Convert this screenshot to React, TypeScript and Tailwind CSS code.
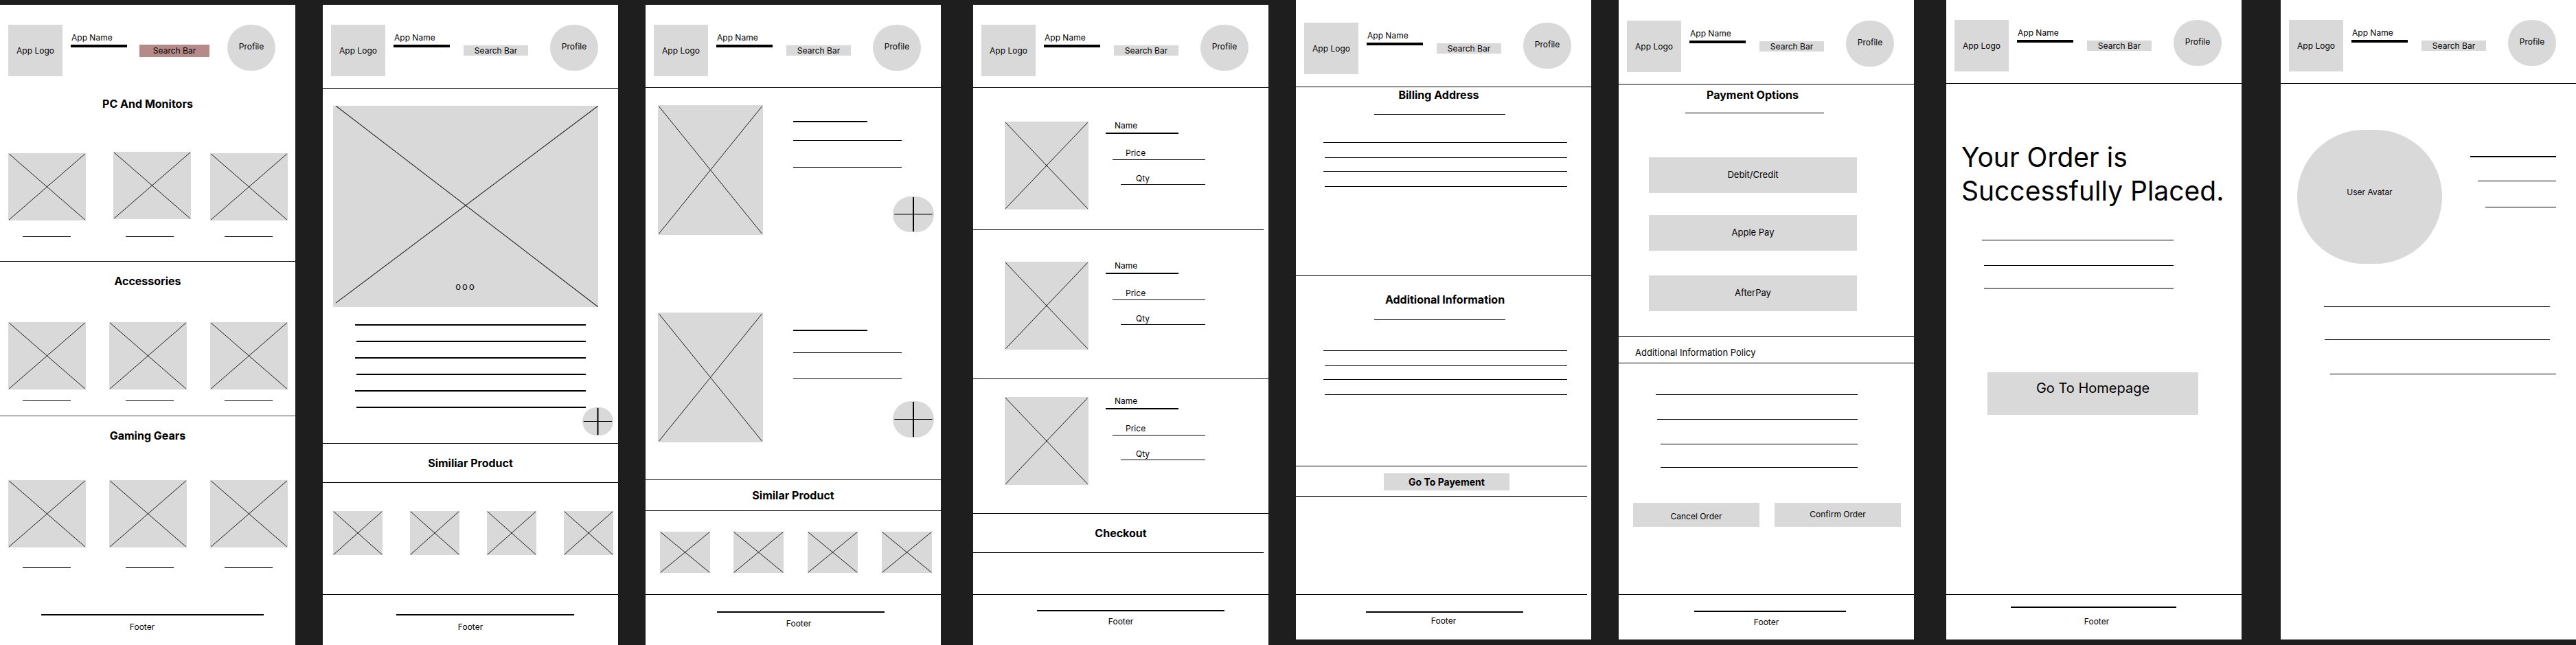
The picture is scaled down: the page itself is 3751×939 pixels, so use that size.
import React from "react";

function Ph({ className = "" }: { className?: string }) {
  return (
    <div className={`relative shrink-0 bg-[#d9d9d9] ${className}`}>
      <svg className="absolute inset-0 h-full w-full" viewBox="0 0 100 100" preserveAspectRatio="none">
        <line x1="1" y1="1" x2="99" y2="99" stroke="#1a1a1a" strokeWidth="1" vectorEffect="non-scaling-stroke" />
        <line x1="99" y1="1" x2="1" y2="99" stroke="#1a1a1a" strokeWidth="1" vectorEffect="non-scaling-stroke" />
      </svg>
    </div>
  );
}

function PlusBtn({ className = "" }: { className?: string }) {
  return (
    <div className={`relative shrink-0 rounded-full bg-[#d9d9d9] ${className}`}>
      <svg className="absolute inset-0 h-full w-full" viewBox="0 0 100 100" preserveAspectRatio="none">
        <line x1="4" y1="50" x2="96" y2="50" stroke="#000" strokeWidth="1" vectorEffect="non-scaling-stroke" />
        <line x1="50" y1="2" x2="50" y2="98" stroke="#000" strokeWidth="2" vectorEffect="non-scaling-stroke" />
      </svg>
    </div>
  );
}

function Header({ className = "", pink = false }: { className?: string; pink?: boolean }) {
  return (
    <div className={`flex shrink-0 items-start border-black ${className}`}>
      <div className="ml-[12px] flex h-[75px] w-[79px] shrink-0 items-center justify-center bg-[#d9d9d9] text-[12px]">App Logo</div>
      <div className="ml-[12px] mt-[11px] w-[82px] shrink-0">
        <div className="pl-[1px] text-[12px] leading-[15px]">App Name</div>
        <div className="mt-[3px] h-[4px] bg-black" />
      </div>
      {pink ? (
        <div className="ml-[18px] mt-[29px] flex h-[18px] w-[102px] shrink-0 items-center justify-center bg-[#b78a8a] text-[12px]">Search Bar</div>
      ) : (
        <div className="ml-[20px] mt-[30px] flex h-[15px] w-[94px] shrink-0 items-center justify-center bg-[#d9d9d9] text-[12px]">Search Bar</div>
      )}
      <div className={`${pink ? "ml-[26px]" : "ml-[32px]"} flex h-[67px] w-[70px] shrink-0 items-center justify-center rounded-full bg-[#d9d9d9] pb-[3px] text-[12px]`}>Profile</div>
    </div>
  );
}

function Footer({ lineCls, textCls }: { lineCls: string; textCls: string }) {
  return (
    <div className="flex flex-col">
      <div className={`h-[2px] bg-black ${lineCls}`} />
      <div className={`text-center text-[12px] leading-[14px] ${textCls}`}>Footer</div>
    </div>
  );
}

function CartItem() {
  return (
    <div className="flex items-start">
      <Ph className="ml-[46px] h-[128px] w-[122px]" />
      <div className="ml-[25px] flex flex-col text-[12px] leading-[12px]">
        <div className="w-[106px] pl-[13px]">Name</div>
        <div className="mt-[4px] h-[2px] w-[106px] bg-black" />
        <div className="ml-[10px] mt-[22px] pl-[19px]">Price</div>
        <div className="ml-[10px] mt-[3px] h-px w-[135px] bg-black" />
        <div className="ml-[22px] mt-[21px] pl-[22px]">Qty</div>
        <div className="ml-[22px] mt-[2px] h-px w-[123px] bg-black" />
      </div>
    </div>
  );
}

export default function App() {
  return (
    <div className="flex h-[939px] w-[3751px] items-start overflow-hidden bg-[#1e1e1e] font-[Inter,sans-serif] text-black">
      {/* Home */}
      <div className="mt-[7px] flex h-[932px] w-[430px] shrink-0 flex-col bg-white">
        <Header className="h-[121px] pt-[29px]" pink />
        <section className="flex h-[253px] shrink-0 flex-col border-b border-black">
          <h2 className="mt-[13px] text-center text-[16px] font-bold leading-[20px]">PC And Monitors</h2>
          <div className="mt-[62px] flex items-start">
            <Ph className="ml-[12px] h-[98px] w-[113px]" />
            <Ph className="ml-[40px] -mt-[2px] h-[98px] w-[113px]" />
            <Ph className="ml-[28px] h-[98px] w-[113px]" />
          </div>
          <div className="mt-[23px] flex">
            <div className="ml-[33px] h-px w-[70px] bg-black" />
            <div className="ml-[80px] h-px w-[70px] bg-black" />
            <div className="ml-[74px] h-px w-[70px] bg-black" />
          </div>
        </section>
        <section className="flex h-[225px] shrink-0 flex-col border-b border-[#444]">
          <h2 className="mt-[18px] text-center text-[16px] font-bold leading-[20px]">Accessories</h2>
          <div className="mt-[50px] flex">
            <Ph className="ml-[12px] h-[98px] w-[113px]" />
            <Ph className="ml-[34px] h-[98px] w-[113px]" />
            <Ph className="ml-[34px] h-[98px] w-[113px]" />
          </div>
          <div className="mt-[16px] flex">
            <div className="ml-[33px] h-px w-[70px] bg-black" />
            <div className="ml-[80px] h-px w-[70px] bg-black" />
            <div className="ml-[74px] h-px w-[70px] bg-black" />
          </div>
        </section>
        <section className="flex shrink-0 flex-col">
          <h2 className="mt-[18px] text-center text-[16px] font-bold leading-[20px]">Gaming Gears</h2>
          <div className="mt-[55px] flex">
            <Ph className="ml-[12px] h-[98px] w-[113px]" />
            <Ph className="ml-[34px] h-[98px] w-[113px]" />
            <Ph className="ml-[34px] h-[98px] w-[113px]" />
          </div>
          <div className="mt-[29px] flex">
            <div className="ml-[33px] h-px w-[70px] bg-black" />
            <div className="ml-[80px] h-px w-[70px] bg-black" />
            <div className="ml-[74px] h-px w-[70px] bg-black" />
          </div>
        </section>
        <div className="mt-[67px]">
          <Footer lineCls="ml-[60px] w-[324px]" textCls="mt-[10px] pr-[16px]" />
        </div>
      </div>

      {/* Product detail */}
      <div className="ml-[40px] mt-[7px] flex h-[932px] w-[430px] shrink-0 flex-col bg-white">
        <Header className="h-[122px] border-b pt-[29px]" />
        <section className="flex h-[517px] shrink-0 flex-col border-b border-black">
          <div className="relative ml-[15px] mt-[25px] flex h-[293px] w-[386px] items-end justify-center bg-[#d9d9d9] pb-[22px]">
            <svg className="absolute inset-0 h-full w-full" viewBox="0 0 100 100" preserveAspectRatio="none">
              <line x1="1" y1="0" x2="100" y2="100" stroke="#1a1a1a" strokeWidth="1" vectorEffect="non-scaling-stroke" />
              <line x1="100" y1="0" x2="1" y2="98" stroke="#1a1a1a" strokeWidth="1" vectorEffect="non-scaling-stroke" />
            </svg>
            <span className="relative text-[13px] leading-[16px] tracking-[2px]">ooo</span>
          </div>
          <div className="ml-[47px] mt-[25px] h-[2px] w-[336px] bg-black" />
          <div className="ml-[49px] mt-[22px] h-[2px] w-[334px] bg-black" />
          <div className="ml-[47px] mt-[22px] h-[2px] w-[336px] bg-black" />
          <div className="ml-[49px] mt-[22px] h-[2px] w-[334px] bg-black" />
          <div className="ml-[47px] mt-[22px] h-[2px] w-[336px] bg-black" />
          <div className="ml-[49px] mt-[22px] h-[2px] w-[334px] bg-black" />
          <PlusBtn className="ml-[378px] -mt-[1px] h-[41px] w-[45px]" />
        </section>
        <section className="flex h-[57px] shrink-0 items-center justify-center border-b border-black">
          <h2 className="text-[16px] font-bold leading-[20px]">Similiar Product</h2>
        </section>
        <section className="flex h-[163px] shrink-0 items-start border-b border-black pt-[41px]">
          <Ph className="ml-[15px] h-[64px] w-[72px]" />
          <Ph className="ml-[40px] h-[64px] w-[72px]" />
          <Ph className="ml-[40px] h-[64px] w-[72px]" />
          <Ph className="ml-[40px] h-[64px] w-[72px]" />
        </section>
        <div className="mt-[28px]">
          <Footer lineCls="ml-[107px] w-[259px]" textCls="mt-[10px]" />
        </div>
      </div>

      {/* Wishlist */}
      <div className="ml-[40px] mt-[7px] flex h-[932px] w-[430px] shrink-0 flex-col bg-white">
        <Header className="h-[121px] border-b pt-[29px]" />
        <section className="flex h-[571px] shrink-0 flex-col border-b border-black pt-[25px]">
          <div className="flex items-start">
            <Ph className="ml-[18px] h-[189px] w-[153px]" />
            <div className="ml-[44px] flex flex-col">
              <div className="mt-[23px] h-[2px] w-[108px] bg-black" />
              <div className="mt-[26px] h-px w-[158px] bg-black" />
              <div className="mt-[38px] h-px w-[158px] bg-black" />
              <PlusBtn className="ml-[145px] mt-[42px] h-[52px] w-[60px]" />
            </div>
          </div>
          <div className="mt-[113px] flex items-start">
            <Ph className="ml-[18px] h-[189px] w-[153px]" />
            <div className="ml-[44px] flex flex-col">
              <div className="mt-[25px] h-[2px] w-[108px] bg-black" />
              <div className="mt-[31px] h-px w-[158px] bg-black" />
              <div className="mt-[37px] h-px w-[158px] bg-black" />
              <PlusBtn className="ml-[145px] mt-[32px] h-[53px] w-[60px]" />
            </div>
          </div>
        </section>
        <section className="flex h-[45px] shrink-0 items-center justify-center border-b border-black">
          <h2 className="text-[16px] font-bold leading-[20px]">Similar Product</h2>
        </section>
        <section className="flex h-[122px] shrink-0 items-start border-b border-black pt-[30px]">
          <Ph className="ml-[21px] h-[60px] w-[73px]" />
          <Ph className="ml-[34px] h-[60px] w-[73px]" />
          <Ph className="ml-[35px] h-[60px] w-[73px]" />
          <Ph className="ml-[35px] h-[60px] w-[73px]" />
        </section>
        <div className="mt-[24px]">
          <Footer lineCls="ml-[104px] w-[244px]" textCls="mt-[9px] pl-[16px]" />
        </div>
      </div>

      {/* Cart */}
      <div className="ml-[47px] mt-[7px] flex h-[932px] w-[430px] shrink-0 flex-col bg-white">
        <Header className="h-[121px] border-b pt-[29px]" />
        <div className="h-[206px] shrink-0 pt-[49px]">
          <CartItem />
        </div>
        <div className="h-px w-[423px] shrink-0 bg-black" />
        <div className="h-[217px] shrink-0 border-b border-black pt-[46px]">
          <CartItem />
        </div>
        <div className="h-[196px] shrink-0 border-b border-black pt-[26px]">
          <CartItem />
        </div>
        <section className="flex h-[56px] shrink-0 items-center justify-center">
          <h2 className="text-[16px] font-bold leading-[20px]">Checkout</h2>
        </section>
        <div className="h-px w-[423px] shrink-0 bg-black" />
        <div className="h-[61px] shrink-0 border-b border-black" />
        <div className="mt-[22px]">
          <Footer lineCls="ml-[93px] w-[273px]" textCls="mt-[8px]" />
        </div>
      </div>

      {/* Billing */}
      <div className="ml-[40px] flex h-[931px] w-[430px] shrink-0 flex-col bg-white">
        <Header className="h-[127px] border-b pt-[33px]" />
        <section className="flex h-[275px] shrink-0 flex-col border-b border-black">
          <h2 className="mt-[1px] pr-[14px] text-center text-[16px] font-bold leading-[20px]">Billing Address</h2>
          <div className="ml-[114px] mt-[18px] h-px w-[191px] bg-black" />
          <div className="ml-[40px] mt-[40px] h-px w-[355px] bg-black" />
          <div className="ml-[42px] mt-[21px] h-px w-[353px] bg-black" />
          <div className="ml-[40px] mt-[19px] h-px w-[355px] bg-black" />
          <div className="ml-[42px] mt-[21px] h-px w-[353px] bg-black" />
        </section>
        <section className="flex h-[276px] shrink-0 flex-col">
          <h2 className="mt-[24px] pl-[4px] text-center text-[16px] font-bold leading-[20px]">Additional Information</h2>
          <div className="ml-[114px] mt-[19px] h-px w-[191px] bg-black" />
          <div className="ml-[40px] mt-[44px] h-px w-[355px] bg-black" />
          <div className="ml-[42px] mt-[21px] h-px w-[353px] bg-black" />
          <div className="ml-[40px] mt-[19px] h-px w-[355px] bg-black" />
          <div className="ml-[42px] mt-[21px] h-px w-[353px] bg-black" />
        </section>
        <div className="h-px w-[424px] shrink-0 bg-black" />
        <div className="h-[43px] shrink-0 pt-[10px]">
          <div className="ml-[128px] flex h-[25px] w-[183px] items-center justify-center bg-[#d9d9d9] text-[14px] font-bold">Go To Payement</div>
        </div>
        <div className="h-px w-[424px] shrink-0 bg-black" />
        <div className="h-[142px] shrink-0" />
        <div className="h-px w-[424px] shrink-0 bg-black" />
        <div className="mt-[24px]">
          <Footer lineCls="ml-[102px] w-[229px]" textCls="mt-[5px]" />
        </div>
      </div>

      {/* Payment */}
      <div className="ml-[40px] flex h-[931px] w-[430px] shrink-0 flex-col bg-white">
        <Header className="h-[123px] border-b pt-[30px]" />
        <section className="flex h-[367px] shrink-0 flex-col border-b border-black">
          <h2 className="mt-[5px] pr-[40px] text-center text-[16px] font-bold leading-[20px]">Payment Options</h2>
          <div className="ml-[97px] mt-[16px] h-px w-[202px] bg-black" />
          <div className="ml-[44px] mt-[64px] flex h-[52px] w-[303px] items-center justify-center bg-[#d9d9d9] text-[13px]">Debit/Credit</div>
          <div className="ml-[44px] mt-[32px] flex h-[52px] w-[303px] items-center justify-center bg-[#d9d9d9] text-[13px]">Apple Pay</div>
          <div className="ml-[44px] mt-[36px] flex h-[52px] w-[303px] items-center justify-center bg-[#d9d9d9] text-[13px]">AfterPay</div>
        </section>
        <div className="flex h-[39px] shrink-0 flex-col border-b border-black pl-[24px] pt-[16px]">
          <span className="text-[13px] leading-[15px]">Additional Information Policy</span>
        </div>
        <section className="flex h-[337px] shrink-0 flex-col border-b border-black">
          <div className="ml-[54px] mt-[45px] h-px w-[294px] bg-black" />
          <div className="ml-[56px] mt-[35px] h-px w-[292px] bg-black" />
          <div className="ml-[61px] mt-[35px] h-px w-[287px] bg-black" />
          <div className="ml-[61px] mt-[33px] h-px w-[287px] bg-black" />
          <div className="mt-[51px] flex items-start">
            <div className="ml-[21px] flex h-[35px] w-[184px] items-center justify-center bg-[#d9d9d9] pt-[5px] text-[12px]">Cancel Order</div>
            <div className="ml-[22px] flex h-[35px] w-[184px] items-center justify-center bg-[#d9d9d9] pb-[2px] text-[12px]">Confirm Order</div>
          </div>
        </section>
        <div className="mt-[23px]">
          <Footer lineCls="ml-[110px] w-[221px]" textCls="mt-[8px]" />
        </div>
      </div>

      {/* Order placed */}
      <div className="ml-[47px] flex h-[931px] w-[430px] shrink-0 flex-col bg-white">
        <Header className="h-[122px] border-b pt-[29px]" />
        <section className="flex h-[744px] shrink-0 flex-col border-b border-black">
          <h1 className="ml-[22px] mt-[82px] whitespace-nowrap text-[39px] leading-[49px]">
            Your Order is
            <br />
            Successfully Placed.
          </h1>
          <div className="ml-[52px] mt-[47px] h-px w-[279px] bg-black" />
          <div className="ml-[55px] mt-[36px] h-px w-[276px] bg-black" />
          <div className="ml-[55px] mt-[32px] h-px w-[276px] bg-black" />
          <div className="ml-[60px] mt-[122px] flex h-[62px] w-[307px] items-center justify-center bg-[#d9d9d9] pb-[16px] text-[20px]">Go To Homepage</div>
        </section>
        <div className="mt-[17px]">
          <Footer lineCls="ml-[94px] w-[241px]" textCls="mt-[13px] pl-[8px]" />
        </div>
      </div>

      {/* Profile */}
      <div className="ml-[57px] flex h-[931px] w-[430px] shrink-0 flex-col bg-white">
        <Header className="h-[122px] border-b pt-[29px]" />
        <div className="flex items-start">
          <div className="ml-[24px] mt-[67px] flex h-[195px] w-[211px] shrink-0 items-center justify-center rounded-full bg-[#d9d9d9] pb-[14px] text-[12px]">User Avatar</div>
          <div className="ml-[41px] flex flex-col">
            <div className="mt-[105px] h-[2px] w-[125px] bg-black" />
            <div className="ml-[11px] mt-[34px] h-px w-[114px] bg-black" />
            <div className="ml-[22px] mt-[37px] h-px w-[103px] bg-black" />
          </div>
        </div>
        <div className="ml-[63px] mt-[62px] h-px w-[329px] bg-black" />
        <div className="ml-[64px] mt-[47px] h-px w-[328px] bg-black" />
        <div className="ml-[72px] mt-[49px] h-px w-[329px] bg-black" />
      </div>
    </div>
  );
}
